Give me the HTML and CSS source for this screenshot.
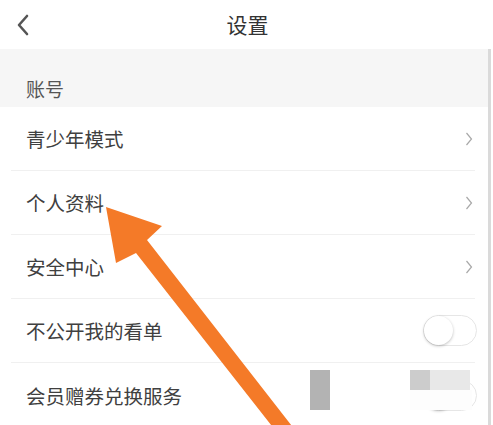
FILE: index.html
```html
<!DOCTYPE html>
<html lang="zh-CN">
<head>
<meta charset="utf-8">
<title>设置</title>
<link rel="stylesheet" href="styles.css">
</head>
<body>
<div class="screen">
  <header class="topbar">
    <div class="back">
      <svg width="14" height="22" viewBox="0 0 14 22"><polyline points="11,2 3,11 11,20" fill="none" stroke="#555" stroke-width="2.6" stroke-linecap="round" stroke-linejoin="round"/></svg>
    </div>
    <div class="title">设置</div>
    <div></div>
  </header>
  <div class="body">
    <main class="content">
      <div class="section-title">账号</div>
      <ul class="list">
        <li class="row"><span>青少年模式</span><svg class="chev" width="8" height="16" viewBox="0 0 8 16"><polyline points="1.5,2 6.5,8 1.5,14" fill="none" stroke="#a8a8a8" stroke-width="1.2"/></svg></li>
        <li class="row"><span>个人资料</span><svg class="chev" width="8" height="16" viewBox="0 0 8 16"><polyline points="1.5,2 6.5,8 1.5,14" fill="none" stroke="#a8a8a8" stroke-width="1.2"/></svg></li>
        <li class="row"><span>安全中心</span><svg class="chev" width="8" height="16" viewBox="0 0 8 16"><polyline points="1.5,2 6.5,8 1.5,14" fill="none" stroke="#a8a8a8" stroke-width="1.2"/></svg></li>
        <li class="row"><span>不公开我的看单</span><span class="toggle"><span class="knob"></span></span></li>
        <li class="row last"><span>会员赠券兑换服务</span><span class="toggle"><span class="knob"></span></span></li>
      </ul>
    </main>
    <div class="scrollbar"></div>
  </div>

  <div class="mask m1"></div>
  <div class="mask m2"></div>
  <div class="mask m3"></div>
  <div class="mask m4"></div>

  <svg class="arrow" width="493" height="425" viewBox="0 0 493 425">
    <polygon points="106,207 162,226 147,240 295,430 275,430 136,253 116,263" fill="#f47a28"/>
  </svg>
</div>
</body>
</html>
```

FILE: styles.css
```css
* { box-sizing: border-box; }
html, body {
  margin: 0;
  padding: 0;
  background: #fff;
}
body {
  font-family: "Noto Sans CJK SC", "Noto Sans", sans-serif;
  color: #333;
}
.screen {
  position: relative;
  width: 493px;
  height: 425px;
  overflow: hidden;
  background: #fff;
}
.topbar {
  height: 49px;
  display: grid;
  grid-template-columns: 1fr auto 1fr;
  align-items: center;
  background: #fff;
}
.back {
  padding-left: 16px;
  display: flex;
  align-items: center;
  height: 49px;
}
.title {
  font-size: 21px;
  color: #333;
  line-height: 1;
  padding-left: 2px;
}
.body {
  display: flex;
  height: 376px;
}
.content {
  flex: 1;
}
.scrollbar {
  width: 3px;
  margin-right: 2px;
  background: #dadada;
}
.section-title {
  height: 58px;
  background: #f6f6f6;
  padding: 20px 0 0 26px;
  display: flex;
  align-items: center;
  font-size: 19px;
  color: #555;
}
.list {
  list-style: none;
  margin: 0;
  padding: 0;
}
.row {
  height: 64px;
  margin: 0 13px 0 11px;
  padding: 0 2px 0 15px;
  display: flex;
  align-items: center;
  justify-content: space-between;
  font-size: 19.5px;
  color: #404040;
  border-bottom: 1px solid #f0f0f0;
}
.row.last { border-bottom: none; }
.chev { display: block; }
.toggle {
  position: relative;
  width: 54px;
  height: 31px;
  margin-right: -4px;
  border: 1px solid #e6e6e6;
  border-radius: 16px;
  background: #fff;
}
.toggle .knob {
  position: absolute;
  left: 0;
  top: 0;
  width: 29px;
  height: 29px;
  border-radius: 50%;
  background: #fff;
  box-shadow: 0 1px 3px rgba(0,0,0,0.25);
}
.mask {
  position: absolute;
}
.m1 { left: 310px; top: 370px; width: 20px; height: 40px; background: #b3b3b3; }
.m2 { left: 410px; top: 370px; width: 20px; height: 20px; background: #cccccc; }
.m3 { left: 430px; top: 370px; width: 40px; height: 20px; background: #e8e8e8; }
.m4 { left: 410px; top: 390px; width: 62px; height: 20px; background: #fdfdfd; }
.arrow {
  position: absolute;
  left: 0;
  top: 0;
  pointer-events: none;
}
```
